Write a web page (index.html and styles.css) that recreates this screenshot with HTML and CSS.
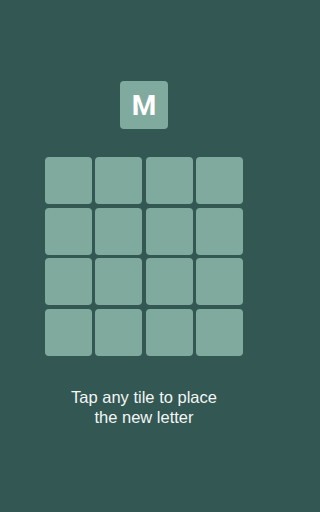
FILE: index.html
```html
<!DOCTYPE html>
<html lang="en">
<head>
<meta charset="utf-8">
<meta name="viewport" content="width=device-width, initial-scale=1">
<link rel="stylesheet" href="styles.css">
<title>Tile game</title>
</head>
<body>
<main class="screen">
  <div class="next-tile">M</div>
  <div class="board">
    <div class="cell"></div><div class="cell"></div><div class="cell"></div><div class="cell"></div>
    <div class="cell"></div><div class="cell"></div><div class="cell"></div><div class="cell"></div>
    <div class="cell"></div><div class="cell"></div><div class="cell"></div><div class="cell"></div>
    <div class="cell"></div><div class="cell"></div><div class="cell"></div><div class="cell"></div>
  </div>
  <p class="hint">Tap any tile to place<br>the new letter</p>
</main>
</body>
</html>
```
FILE: styles.css
```css
html, body {
  margin: 0;
  padding: 0;
  height: 100%;
}
body {
  background: #335753;
  font-family: Roboto, "Liberation Sans", sans-serif;
}
.screen {
  width: 288px;
  height: 512px;
  box-sizing: border-box;
  padding-top: 81px;
  display: flex;
  flex-direction: column;
  align-items: center;
}
.next-tile {
  width: 48px;
  height: 48px;
  border-radius: 4px;
  background: #81aa9f;
  color: #ffffff;
  font-weight: 700;
  font-size: 28px;
  display: flex;
  align-items: center;
  justify-content: center;
}
.board {
  margin-top: 28px;
  width: 198px;
  display: grid;
  grid-template-columns: repeat(4, 1fr);
  grid-auto-rows: 47px;
  gap: 3.5px;
}
.cell {
  background: #81aa9f;
  border-radius: 4px;
}
.hint {
  margin: 31px 0 0;
  color: #f2f6f4;
  font-family: "Liberation Sans", Arial, sans-serif;
  font-size: 16.5px;
  line-height: 20px;
  text-align: center;
}
```
